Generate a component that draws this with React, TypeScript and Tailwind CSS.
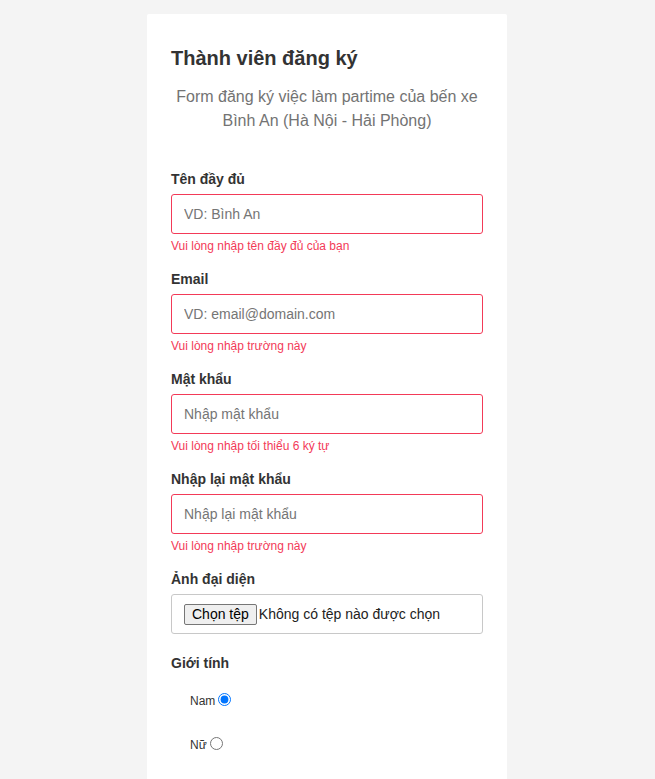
import { useState } from "react";

const font = { fontFamily: '"Liberation Sans", Arial, sans-serif' };

interface FieldProps {
  label: string;
  type: string;
  placeholder: string;
  message: string;
}

function Field({ label, type, placeholder, message }: FieldProps) {
  return (
    <div className="pb-[15px]">
      <label className="block text-[14px] leading-5 font-bold text-[#333]">{label}</label>
      <input
        type={type}
        placeholder={placeholder}
        className="mt-[5px] block w-full h-10 px-3 text-[14px] rounded-[3px] border border-[#f33a58] outline-none text-[#333] placeholder:text-[#757575]"
      />
      <span className="block mt-1 text-[12px] leading-4 text-[#f33a58]">{message}</span>
    </div>
  );
}

export default function App() {
  const [gender, setGender] = useState("male");

  return (
    <div className="min-h-screen bg-[#f4f4f4] flex justify-center pt-[14px] pr-[1px]" style={font}>
      <div className="w-[360px] bg-white rounded-[2px] px-6 pt-8 pb-10">
        <h3 className="text-[20px] leading-6 font-bold text-[#333]">Thành viên đăng ký</h3>
        <p className="mt-[15px] text-center text-[16px] leading-6 text-[#737373]">
          Form đăng ký việc làm partime của bến xe Bình An (Hà Nội - Hải Phòng)
        </p>

        <div className="mt-9">
          <Field label="Tên đầy đủ" type="text" placeholder="VD: Bình An" message="Vui lòng nhập tên đầy đủ của bạn" />
          <Field label="Email" type="text" placeholder="VD: email@domain.com" message="Vui lòng nhập trường này" />
          <Field label="Mật khẩu" type="password" placeholder="Nhập mật khẩu" message="Vui lòng nhập tối thiểu 6 ký tự" />
          <Field label="Nhập lại mật khẩu" type="password" placeholder="Nhập lại mật khẩu" message="Vui lòng nhập trường này" />

          <div className="pb-[19px]">
            <label className="block text-[14px] leading-5 font-bold text-[#333]">Ảnh đại diện</label>
            <div className="mt-[5px] h-10 px-3 flex items-center rounded-[3px] border border-[#c8c8c8]">
              <span className="px-[7px] h-[21px] flex items-center rounded-[2px] border border-[#767676] bg-[#efefef] text-[14px] text-black">
                Chọn tệp
              </span>
              <span className="ml-[2px] text-[14px] text-[#222]">Không có tệp nào được chọn</span>
            </div>
          </div>

          <div>
            <label className="block text-[14px] leading-5 font-bold text-[#333]">Giới tính</label>
            <div className="pl-[19px] pt-[19px] flex flex-col gap-[30px]">
              <label className="flex items-center h-[14px] text-[12px] text-[#333]">
                <span className="mt-[3px]">Nam</span>
                <input
                  type="radio"
                  name="gender"
                  checked={gender === "male"}
                  onChange={() => setGender("male")}
                  className="ml-[3px] w-[13px] h-[13px] accent-[#0075ff]"
                />
              </label>
              <label className="flex items-center h-[14px] text-[12px] text-[#333]">
                <span className="mt-[3px]">Nữ</span>
                <input
                  type="radio"
                  name="gender"
                  checked={gender === "female"}
                  onChange={() => setGender("female")}
                  className="ml-[3px] w-[13px] h-[13px] accent-[#0075ff]"
                />
              </label>
            </div>
          </div>
        </div>
      </div>
    </div>
  );
}
